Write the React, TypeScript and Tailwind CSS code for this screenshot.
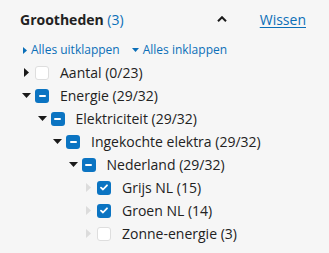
import React from 'react';

type State = 'none' | 'some' | 'all';

interface Node {
  label: string;
  level: number;
  arrow: 'right' | 'down' | 'muted';
  state: State;
}

const rows: Node[] = [
  { label: 'Aantal (0/23)', level: 0, arrow: 'right', state: 'none' },
  { label: 'Energie (29/32)', level: 0, arrow: 'down', state: 'some' },
  { label: 'Elektriciteit (29/32)', level: 1, arrow: 'down', state: 'some' },
  { label: 'Ingekochte elektra (29/32)', level: 2, arrow: 'down', state: 'some' },
  { label: 'Nederland (29/32)', level: 3, arrow: 'down', state: 'some' },
  { label: 'Grijs NL (15)', level: 4, arrow: 'muted', state: 'all' },
  { label: 'Groen NL (14)', level: 4, arrow: 'muted', state: 'all' },
  { label: 'Zonne-energie (3)', level: 4, arrow: 'muted', state: 'none' },
];

const Arrow: React.FC<{ kind: Node['arrow'] }> = ({ kind }) => {
  if (kind === 'down') {
    return (
      <svg width="9" height="5" viewBox="0 0 9 5" className="ml-[2px]">
        <path d="M0 0 L9 0 L4.5 5 Z" fill="#1a1a1a" />
      </svg>
    );
  }
  return (
    <svg width="5" height="9" viewBox="0 0 5 9" className="ml-[4px]">
      <path d="M0 0 L5 4.5 L0 9 Z" fill={kind === 'muted' ? '#dcdcdc' : '#1a1a1a'} />
    </svg>
  );
};

const Checkbox: React.FC<{ state: State }> = ({ state }) => {
  if (state === 'none') {
    return <div className="w-[14px] h-[14px] rounded-[3px] bg-white border border-[#dedede]" />;
  }
  return (
    <div className="w-[14px] h-[14px] rounded-[3px] bg-[#0b74c2] flex items-center justify-center">
      {state === 'some' ? (
        <div className="w-[7px] h-[2px] bg-white rounded-[1px]" />
      ) : (
        <svg width="8" height="7" viewBox="0 0 8 7">
          <path d="M1 3.6 L3 5.5 L7 1.3" stroke="white" strokeWidth="1.8" fill="none" strokeLinecap="round" strokeLinejoin="round" />
        </svg>
      )}
    </div>
  );
};

export default function App() {
  return (
    <div
      className="w-[329px] h-[253px] bg-[#f6f6f6] text-[#222] pl-[20px] pr-[23px] pt-[9px]"
      style={{ fontFamily: '"Open Sans", "Liberation Sans", sans-serif' }}
    >
      <div className="flex items-center h-[20px]">
        <span className="text-[14px] font-bold">
          Grootheden <span className="font-normal text-[#0b6fb8]">(3)</span>
        </span>
        <svg width="10" height="6" viewBox="0 0 10 6" className="ml-auto mr-[33px] mt-[-1px]">
          <path d="M1 5.2 L5 1.2 L9 5.2" stroke="#1a1a1a" strokeWidth="2" fill="none" />
        </svg>
        <a className="text-[14px] text-[#0b6fb8] underline underline-offset-2">Wissen</a>
      </div>

      <div className="flex items-center gap-[12px] mt-[13px] h-[16px] text-[12px] text-[#0b6fb8]">
        <span className="flex items-center gap-[4px] ml-[3px]">
          <svg width="4" height="7" viewBox="0 0 4 7">
            <path d="M0 0 L4 3.5 L0 7 Z" fill="#0b6fb8" />
          </svg>
          Alles uitklappen
        </span>
        <span className="flex items-center gap-[4px]">
          <svg width="7" height="4" viewBox="0 0 7 4">
            <path d="M0 0 L7 0 L3.5 4 Z" fill="#0b6fb8" />
          </svg>
          Alles inklappen
        </span>
      </div>

      <ul className="mt-[3px]">
        {rows.map((row) => (
          <li
            key={row.label}
            className="flex items-center h-[23px] text-[14px]"
            style={{ paddingLeft: row.level * 15.5 }}
          >
            <div className="w-[15px] flex items-center">
              <Arrow kind={row.arrow} />
            </div>
            <Checkbox state={row.state} />
            <span className="ml-[11px]">{row.label}</span>
          </li>
        ))}
      </ul>
    </div>
  );
}
